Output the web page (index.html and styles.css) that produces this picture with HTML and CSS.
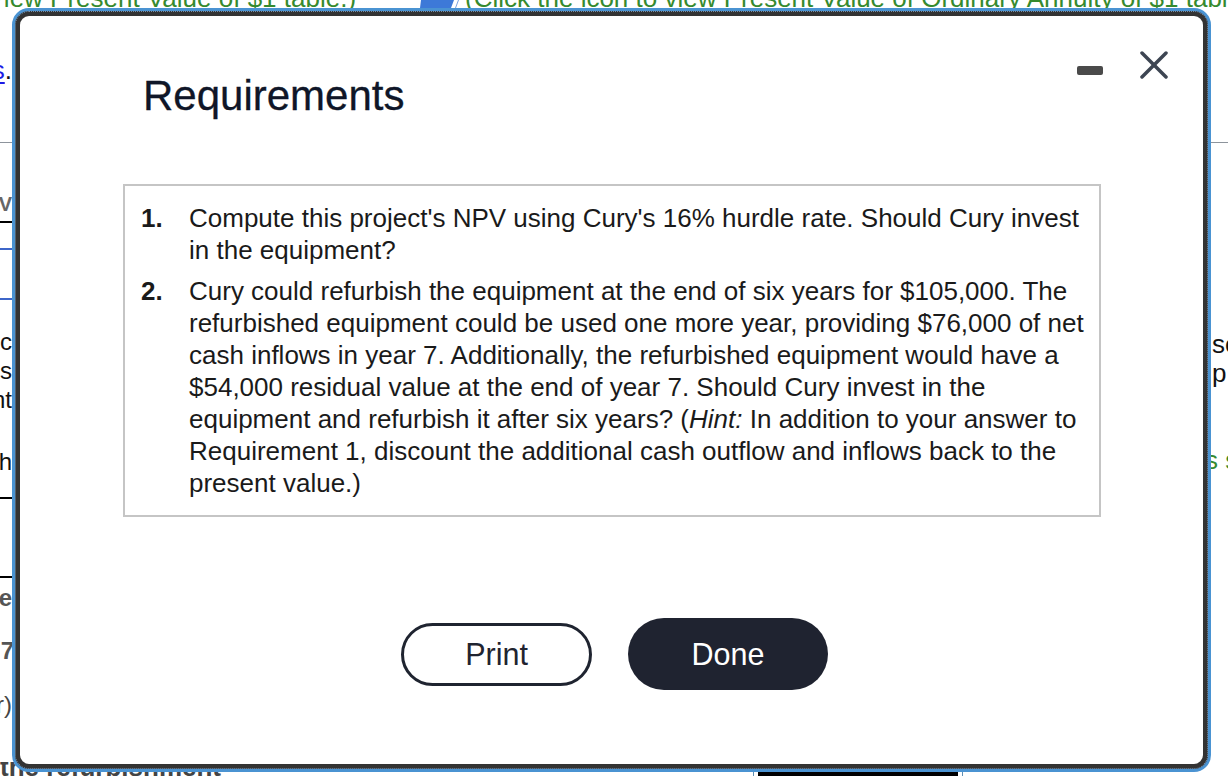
FILE: index.html
```html
<!DOCTYPE html>
<html lang="en">
<head>
<meta charset="utf-8">
<title>Requirements</title>
<link rel="stylesheet" href="styles.css">
</head>
<body>
<div class="page">
  <div class="topline">
    <span class="tl-text tl-first">View Present Value of $1 table.)</span>
    <svg class="iconstub" viewBox="0 0 40 9" aria-hidden="true">
      <polygon points="1,0 34,0 31,8 0,8" fill="#3d79d8"/>
      <line x1="38.5" y1="0" x2="35.5" y2="8" stroke="#7aa2e0" stroke-width="1"/>
    </svg>
    <span class="tl-text tl-second">(Click the icon to view Present Value of Ordinary Annuity of $1 table.)</span>
  </div>

  <div class="side side-left">
    <div class="l-link"><span class="lnk">s</span>.</div>
    <div class="rule rule-gray r1"></div>
    <div class="l-v">V</div>
    <div class="rule rule-black r2"></div>
    <div class="rule rule-blue r3"></div>
    <div class="rule rule-blue r4"></div>
    <div class="l-text l-c">c</div>
    <div class="l-text">is</div>
    <div class="l-text">nt</div>
    <div class="l-text l-h">h</div>
    <div class="rule rule-black r5"></div>
    <div class="rule rule-black r6"></div>
    <div class="l-bold l-e">e</div>
    <div class="l-bold l-7">7</div>
    <div class="l-gray l-r">r)</div>
  </div>

  <div class="middle"></div>

  <div class="side side-right">
    <div class="rule rule-gray r1"></div>
    <div class="r-text r-se">se</div>
    <div class="r-text">p</div>
    <div class="r-green">s s</div>
  </div>

  <div class="bottomline">
    <div class="bottom-text">the refurbishment</div>
    <div class="cell"><div class="bar"></div></div>
  </div>
</div>

<div class="frame">
  <div class="dialog">
    <div class="header">
      <h1 class="title">Requirements</h1>
      <div class="controls">
        <span class="minimize" aria-label="Minimize"></span>
        <svg class="close" viewBox="0 0 28 28" aria-label="Close">
          <line x1="2" y1="2" x2="26" y2="26"/>
          <line x1="26" y1="2" x2="2" y2="26"/>
        </svg>
      </div>
    </div>

    <div class="reqbox">
      <ol class="reqlist">
        <li class="req">
          <span class="num">1.</span>
          <span class="reqtext">Compute this project's NPV using Cury's 16% hurdle rate. Should Cury invest in the equipment?</span>
        </li>
        <li class="req">
          <span class="num">2.</span>
          <span class="reqtext">Cury could refurbish the equipment at the end of six years for $105,000. The refurbished equipment could be used one more year, providing $76,000 of net cash inflows in year 7. Additionally, the refurbished equipment would have a $54,000 residual value at the end of year 7. Should Cury invest in the equipment and refurbish it after six years? (<em>Hint:</em> In addition to your answer to Requirement 1, discount the additional cash outflow and inflows back to the present value.)</span>
        </li>
      </ol>
    </div>

    <div class="actions">
      <button class="btn btn-print">Print</button>
      <button class="btn btn-done">Done</button>
    </div>
  </div>
</div>
</body>
</html>
```

FILE: styles.css
```css
* { box-sizing: border-box; }

html, body {
  margin: 0;
  padding: 0;
}

body {
  width: 1228px;
  height: 776px;
  overflow: hidden;
  position: relative;
  background: #ffffff;
  font-family: "Liberation Sans", Arial, Helvetica, sans-serif;
  color: #1c1c1c;
}

/* ---------- background page ---------- */
.page {
  display: grid;
  grid-template-columns: 12px 1fr 17px;
  grid-template-rows: 10px 752px 14px;
  width: 1228px;
  height: 776px;
}

.topline {
  grid-column: 1 / 4;
  display: flex;
  align-items: flex-start;
  white-space: nowrap;
  color: #368a2e;
  font-size: 26px;
  line-height: 26px;
  overflow: visible;
}

.tl-text { margin-top: -15px; }
.tl-first { margin-left: -13px; }
.iconstub {
  display: block;
  flex: none;
  width: 40px;
  height: 9px;
  margin-left: 64px;
}
.tl-second { margin-left: 5px; }

.side {
  display: flex;
  flex-direction: column;
  overflow: hidden;
  white-space: nowrap;
  font-size: 26px;
  line-height: 29px;
  color: #111;
}

.side-left { align-items: flex-end; }
.side-right { align-items: flex-start; }

.rule { align-self: stretch; flex: none; }
.rule-gray { height: 1px; background: #8d949c; }
.rule-black { height: 2px; background: #000; }
.rule-blue { height: 2px; background: #3d66c9; }

.side-left .r1 { margin-top: 59px; }
.r3 { margin-top: 25px; }
.r4 { margin-top: 48px; }
.r5 { margin-top: 21px; }
.r6 { margin-top: 77px; }

.l-link {
  margin-top: 47px;
  line-height: 26px;
  color: #111;
}
.lnk {
  color: #1c1ce6;
  text-decoration: underline;
  text-decoration-thickness: 2px;
  text-underline-offset: 3px;
}

.side-left .l-v {
  margin-top: 51px;
  font-size: 20px;
  line-height: 20px;
  font-weight: bold;
  color: #666;
}
.side-left .r2 { margin-top: 7px; }

.l-text { font-size: 24px; }
.l-c { margin-top: 27px; }
.l-h { margin-top: 33px; }

.l-bold {
  font-size: 24px;
  line-height: 24px;
  font-weight: bold;
  color: #555;
}
.l-e { margin-top: 8px; }
.l-7 { margin-top: 29px; margin-right: -2px; }
.l-gray {
  font-size: 24px;
  line-height: 24px;
  color: #444;
}
.l-r { margin-top: 30px; }

.side-right .r1 { margin-top: 132px; }
.r-text { margin-left: 1px; }
.r-se { margin-top: 187px; }
.r-green {
  margin-top: 58px;
  margin-left: -6px;
  color: #368a2e;
}

.bottomline {
  grid-column: 1 / 4;
  display: flex;
  align-items: stretch;
  overflow: hidden;
}
.bottom-text {
  width: 753px;
  flex: none;
  overflow: hidden;
  white-space: nowrap;
  margin-top: -8px;
  font-size: 26px;
  line-height: 26px;
  font-weight: bold;
  color: #444;
}
.cell {
  width: 210px;
  flex: none;
  display: flex;
  align-items: flex-end;
  padding: 0 4px;
  border-left: 1px solid #5f8fb4;
  border-right: 1px solid #5f8fb4;
}
.bar {
  flex: 1;
  height: 4px;
  background: #000;
}

/* ---------- modal ---------- */
.frame {
  position: absolute;
  left: 12px;
  top: 8px;
  width: 1199px;
  height: 764px;
  border: 3px solid #4a93d2;
  border-radius: 17px;
  background: #4a93d2;
}

.dialog {
  position: relative;
  height: 100%;
  border: 5px solid #333333;
  border-radius: 14px;
  background: #ffffff;
  display: flex;
  flex-direction: column;
}
.dialog::before {
  content: "";
  position: absolute;
  inset: -5px;
  border: 1px dotted rgba(140, 175, 210, 0.75);
  border-radius: 14px;
  pointer-events: none;
}

.header {
  display: flex;
  align-items: flex-start;
  justify-content: space-between;
  padding: 35px 35px 0 123px;
}

.title {
  margin: 20px 0 0 0;
  font-size: 42px;
  line-height: 50px;
  font-weight: normal;
  color: #0f1628;
  -webkit-text-stroke: 0.3px #0f1628;
}

.controls {
  display: flex;
  align-items: flex-start;
  gap: 37px;
}

.minimize {
  display: block;
  width: 26px;
  height: 9px;
  margin-top: 15px;
  border-radius: 2px;
  background: #4a4a4a;
}

.close {
  display: block;
  width: 28px;
  height: 28px;
  stroke: #3d4552;
  stroke-width: 3.5;
  stroke-linecap: round;
  fill: none;
}

.reqbox {
  margin: 63px 0 0 103px;
  width: 978px;
  border: 2px solid #c5c5c5;
  padding: 16px 8px 16px 16px;
}

.reqlist {
  list-style: none;
  margin: 0;
  padding: 0;
  display: flex;
  flex-direction: column;
  gap: 9px;
}

.req {
  display: flex;
  font-size: 26px;
  line-height: 32px;
  color: #1a1a1a;
}

.num {
  flex: none;
  width: 48px;
  font-weight: bold;
}

.reqtext { flex: 1; }

.actions {
  display: flex;
  justify-content: center;
  align-items: center;
  gap: 36px;
  margin-top: 101px;
  padding-left: 6px;
}

.btn {
  font-family: "Liberation Sans", Arial, Helvetica, sans-serif;
  font-size: 30.5px;
  line-height: 1;
  cursor: pointer;
  padding: 0;
}

.btn-print {
  width: 191px;
  height: 63px;
  border: 3px solid #1f2430;
  border-radius: 32px;
  background: #ffffff;
  color: #1f2430;
}

.btn-done {
  width: 200px;
  height: 72px;
  border: none;
  border-radius: 36px;
  background: #1f2330;
  color: #ffffff;
}
```
